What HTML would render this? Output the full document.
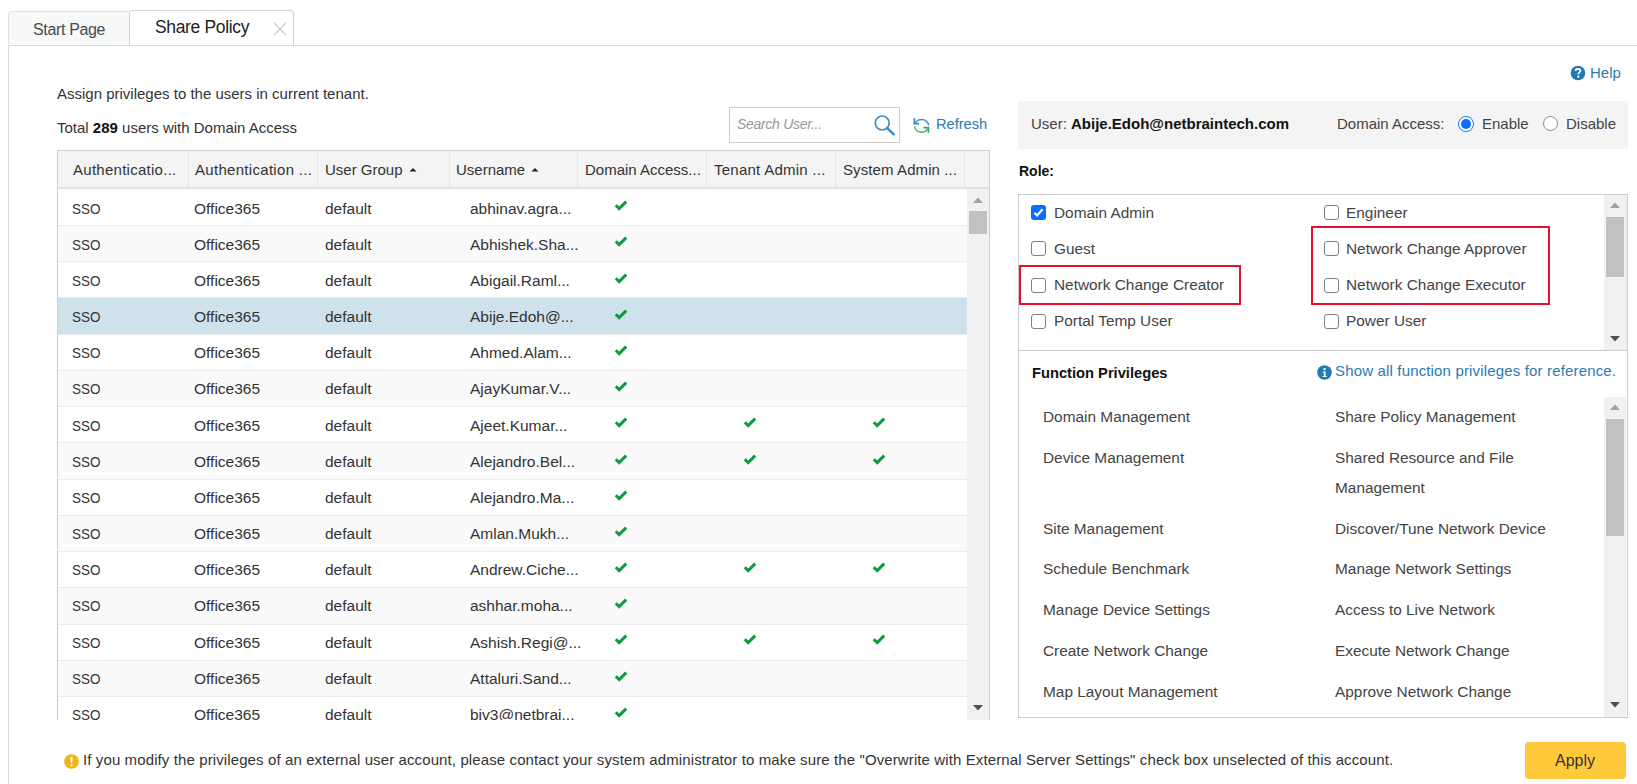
<!DOCTYPE html>
<html>
<head>
<meta charset="utf-8">
<style>
html,body{margin:0;padding:0;background:#fff;}
body{width:1637px;height:784px;position:relative;overflow:hidden;font-family:"Liberation Sans",sans-serif;color:#333;}
.a{position:absolute;}
.t{position:absolute;white-space:nowrap;font-size:15px;line-height:15px;}
.b{font-weight:bold;}
.tb{font-size:15.5px;}
.blue{color:#2a7bb3;}
</style>
</head>
<body>
<!-- tabs -->
<div class="a" style="left:8px;top:11px;width:121px;height:33px;background:#f7f9f9;border-top:1px solid #dfe2e4;border-left:1px solid #dfe2e4;border-top-left-radius:4px;box-sizing:border-box;"></div>
<div class="t" style="left:33px;top:22px;color:#4a4a4a;font-size:16px;line-height:16px;letter-spacing:-0.35px;">Start Page</div>
<div class="a" style="left:129px;top:10px;width:165px;height:36px;background:#fff;border:1px solid #cfd3d6;border-bottom:none;border-radius:4px 4px 0 0;box-sizing:border-box;"></div>
<div class="t" style="left:155px;top:19px;font-size:17.5px;line-height:17px;letter-spacing:-0.35px;color:#222;">Share Policy</div>
<svg class="a" style="left:273px;top:22px" width="14" height="14" viewBox="0 0 14 14"><path d="M1 1L13 13M13 1L1 13" stroke="#cccccc" stroke-width="1.3"/></svg>
<div class="a" style="left:8px;top:45px;width:1629px;height:1px;background:#d9d9d9;"></div>
<div class="a" style="left:8px;top:45px;width:1px;height:739px;background:#d9d9d9;"></div>

<!-- left header text -->
<div class="t" style="left:57px;top:86px;">Assign privileges to the users in current tenant.</div>
<div class="t" style="left:57px;top:120px;">Total <b style="color:#111">289</b> users with Domain Access</div>

<!-- table -->
<div class="a" style="left:57px;top:150px;width:933px;height:570px;border-left:1px solid #cfcfcf;border-right:1px solid #cfcfcf;border-top:1px solid #d0d0d0;box-sizing:border-box;background:#fff;"></div>
<div class="a" style="left:58px;top:151px;width:931px;height:36px;background:#f4f4f4;"></div>
<div class="a" style="left:58px;top:187px;width:931px;height:2px;background:#e2e2e2;"></div>
<div class="a" style="left:188px;top:151px;width:1px;height:36px;background:#e6e6e6;"></div>
<div class="a" style="left:317px;top:151px;width:1px;height:36px;background:#e6e6e6;"></div>
<div class="a" style="left:449px;top:151px;width:1px;height:36px;background:#e6e6e6;"></div>
<div class="a" style="left:577px;top:151px;width:1px;height:36px;background:#e6e6e6;"></div>
<div class="a" style="left:706px;top:151px;width:1px;height:36px;background:#e6e6e6;"></div>
<div class="a" style="left:835px;top:151px;width:1px;height:36px;background:#e6e6e6;"></div>
<div class="a" style="left:964px;top:151px;width:1px;height:36px;background:#e6e6e6;"></div>
<div class="t" style="left:73px;top:162px;letter-spacing:0.27px;">Authenticatio...</div>
<div class="t" style="left:195px;top:162px;letter-spacing:0.3px;">Authentication ...</div>
<div class="t" style="left:325px;top:162px;">User Group</div>
<svg class="a" style="left:409px;top:167px" width="8" height="5" viewBox="0 0 8 5"><path d="M0.5 4.5L4 1L7.5 4.5Z" fill="#222"/></svg>
<div class="t" style="left:456px;top:162px;">Username</div>
<svg class="a" style="left:531px;top:167px" width="8" height="5" viewBox="0 0 8 5"><path d="M0.5 4.5L4 1L7.5 4.5Z" fill="#222"/></svg>
<div class="t" style="left:585px;top:162px;">Domain Access...</div>
<div class="t" style="left:714px;top:162px;letter-spacing:0.25px;">Tenant Admin ...</div>
<div class="t" style="left:843px;top:162px;letter-spacing:0.1px;">System Admin ...</div>
<div class="a" style="left:0;top:0;width:1637px;height:720px;overflow:hidden;">
<div class="a" style="left:58px;top:189.77px;width:909px;height:36.23px;background:#fff;box-sizing:border-box;border-bottom:1px solid #ebebeb;"></div>
<div class="t tb" style="left:72px;top:201px;transform:scaleX(0.87);transform-origin:0 0;">SSO</div>
<div class="t tb" style="left:194px;top:201px;">Office365</div>
<div class="t tb" style="left:325px;top:201px;">default</div>
<div class="t tb" style="left:470px;top:201px;">abhinav.agra...</div>
<svg class="a" style="left:614px;top:200px" width="14" height="12" viewBox="0 0 14 12"><path d="M1.8 5.2L5.2 8.6L12.2 1.6" fill="none" stroke="#0d9b3e" stroke-width="3"/></svg>
<div class="a" style="left:58px;top:226.00px;width:909px;height:36.23px;background:#fafafa;box-sizing:border-box;border-bottom:1px solid #ebebeb;"></div>
<div class="t tb" style="left:72px;top:237px;transform:scaleX(0.87);transform-origin:0 0;">SSO</div>
<div class="t tb" style="left:194px;top:237px;">Office365</div>
<div class="t tb" style="left:325px;top:237px;">default</div>
<div class="t tb" style="left:470px;top:237px;">Abhishek.Sha...</div>
<svg class="a" style="left:614px;top:236px" width="14" height="12" viewBox="0 0 14 12"><path d="M1.8 5.2L5.2 8.6L12.2 1.6" fill="none" stroke="#0d9b3e" stroke-width="3"/></svg>
<div class="a" style="left:58px;top:262.23px;width:909px;height:36.23px;background:#fff;box-sizing:border-box;border-bottom:1px solid #ebebeb;"></div>
<div class="t tb" style="left:72px;top:273px;transform:scaleX(0.87);transform-origin:0 0;">SSO</div>
<div class="t tb" style="left:194px;top:273px;">Office365</div>
<div class="t tb" style="left:325px;top:273px;">default</div>
<div class="t tb" style="left:470px;top:273px;">Abigail.Raml...</div>
<svg class="a" style="left:614px;top:273px" width="14" height="12" viewBox="0 0 14 12"><path d="M1.8 5.2L5.2 8.6L12.2 1.6" fill="none" stroke="#0d9b3e" stroke-width="3"/></svg>
<div class="a" style="left:58px;top:298.46px;width:909px;height:36.23px;background:#cfe1ea;box-sizing:border-box;border-bottom:1px solid #ebebeb;"></div>
<div class="t tb" style="left:72px;top:309px;transform:scaleX(0.87);transform-origin:0 0;">SSO</div>
<div class="t tb" style="left:194px;top:309px;">Office365</div>
<div class="t tb" style="left:325px;top:309px;">default</div>
<div class="t tb" style="left:470px;top:309px;">Abije.Edoh@...</div>
<svg class="a" style="left:614px;top:309px" width="14" height="12" viewBox="0 0 14 12"><path d="M1.8 5.2L5.2 8.6L12.2 1.6" fill="none" stroke="#0d9b3e" stroke-width="3"/></svg>
<div class="a" style="left:58px;top:334.69px;width:909px;height:36.23px;background:#fff;box-sizing:border-box;border-bottom:1px solid #ebebeb;"></div>
<div class="t tb" style="left:72px;top:345px;transform:scaleX(0.87);transform-origin:0 0;">SSO</div>
<div class="t tb" style="left:194px;top:345px;">Office365</div>
<div class="t tb" style="left:325px;top:345px;">default</div>
<div class="t tb" style="left:470px;top:345px;">Ahmed.Alam...</div>
<svg class="a" style="left:614px;top:345px" width="14" height="12" viewBox="0 0 14 12"><path d="M1.8 5.2L5.2 8.6L12.2 1.6" fill="none" stroke="#0d9b3e" stroke-width="3"/></svg>
<div class="a" style="left:58px;top:370.92px;width:909px;height:36.23px;background:#fafafa;box-sizing:border-box;border-bottom:1px solid #ebebeb;"></div>
<div class="t tb" style="left:72px;top:381px;transform:scaleX(0.87);transform-origin:0 0;">SSO</div>
<div class="t tb" style="left:194px;top:381px;">Office365</div>
<div class="t tb" style="left:325px;top:381px;">default</div>
<div class="t tb" style="left:470px;top:381px;">AjayKumar.V...</div>
<svg class="a" style="left:614px;top:381px" width="14" height="12" viewBox="0 0 14 12"><path d="M1.8 5.2L5.2 8.6L12.2 1.6" fill="none" stroke="#0d9b3e" stroke-width="3"/></svg>
<div class="a" style="left:58px;top:407.15px;width:909px;height:36.23px;background:#fff;box-sizing:border-box;border-bottom:1px solid #ebebeb;"></div>
<div class="t tb" style="left:72px;top:418px;transform:scaleX(0.87);transform-origin:0 0;">SSO</div>
<div class="t tb" style="left:194px;top:418px;">Office365</div>
<div class="t tb" style="left:325px;top:418px;">default</div>
<div class="t tb" style="left:470px;top:418px;">Ajeet.Kumar...</div>
<svg class="a" style="left:614px;top:417px" width="14" height="12" viewBox="0 0 14 12"><path d="M1.8 5.2L5.2 8.6L12.2 1.6" fill="none" stroke="#0d9b3e" stroke-width="3"/></svg>
<svg class="a" style="left:743px;top:417px" width="14" height="12" viewBox="0 0 14 12"><path d="M1.8 5.2L5.2 8.6L12.2 1.6" fill="none" stroke="#0d9b3e" stroke-width="3"/></svg>
<svg class="a" style="left:872px;top:417px" width="14" height="12" viewBox="0 0 14 12"><path d="M1.8 5.2L5.2 8.6L12.2 1.6" fill="none" stroke="#0d9b3e" stroke-width="3"/></svg>
<div class="a" style="left:58px;top:443.38px;width:909px;height:36.23px;background:#fafafa;box-sizing:border-box;border-bottom:1px solid #ebebeb;"></div>
<div class="t tb" style="left:72px;top:454px;transform:scaleX(0.87);transform-origin:0 0;">SSO</div>
<div class="t tb" style="left:194px;top:454px;">Office365</div>
<div class="t tb" style="left:325px;top:454px;">default</div>
<div class="t tb" style="left:470px;top:454px;">Alejandro.Bel...</div>
<svg class="a" style="left:614px;top:454px" width="14" height="12" viewBox="0 0 14 12"><path d="M1.8 5.2L5.2 8.6L12.2 1.6" fill="none" stroke="#0d9b3e" stroke-width="3"/></svg>
<svg class="a" style="left:743px;top:454px" width="14" height="12" viewBox="0 0 14 12"><path d="M1.8 5.2L5.2 8.6L12.2 1.6" fill="none" stroke="#0d9b3e" stroke-width="3"/></svg>
<svg class="a" style="left:872px;top:454px" width="14" height="12" viewBox="0 0 14 12"><path d="M1.8 5.2L5.2 8.6L12.2 1.6" fill="none" stroke="#0d9b3e" stroke-width="3"/></svg>
<div class="a" style="left:58px;top:479.61px;width:909px;height:36.23px;background:#fff;box-sizing:border-box;border-bottom:1px solid #ebebeb;"></div>
<div class="t tb" style="left:72px;top:490px;transform:scaleX(0.87);transform-origin:0 0;">SSO</div>
<div class="t tb" style="left:194px;top:490px;">Office365</div>
<div class="t tb" style="left:325px;top:490px;">default</div>
<div class="t tb" style="left:470px;top:490px;">Alejandro.Ma...</div>
<svg class="a" style="left:614px;top:490px" width="14" height="12" viewBox="0 0 14 12"><path d="M1.8 5.2L5.2 8.6L12.2 1.6" fill="none" stroke="#0d9b3e" stroke-width="3"/></svg>
<div class="a" style="left:58px;top:515.84px;width:909px;height:36.23px;background:#fafafa;box-sizing:border-box;border-bottom:1px solid #ebebeb;"></div>
<div class="t tb" style="left:72px;top:526px;transform:scaleX(0.87);transform-origin:0 0;">SSO</div>
<div class="t tb" style="left:194px;top:526px;">Office365</div>
<div class="t tb" style="left:325px;top:526px;">default</div>
<div class="t tb" style="left:470px;top:526px;">Amlan.Mukh...</div>
<svg class="a" style="left:614px;top:526px" width="14" height="12" viewBox="0 0 14 12"><path d="M1.8 5.2L5.2 8.6L12.2 1.6" fill="none" stroke="#0d9b3e" stroke-width="3"/></svg>
<div class="a" style="left:58px;top:552.07px;width:909px;height:36.23px;background:#fff;box-sizing:border-box;border-bottom:1px solid #ebebeb;"></div>
<div class="t tb" style="left:72px;top:562px;transform:scaleX(0.87);transform-origin:0 0;">SSO</div>
<div class="t tb" style="left:194px;top:562px;">Office365</div>
<div class="t tb" style="left:325px;top:562px;">default</div>
<div class="t tb" style="left:470px;top:562px;">Andrew.Ciche...</div>
<svg class="a" style="left:614px;top:562px" width="14" height="12" viewBox="0 0 14 12"><path d="M1.8 5.2L5.2 8.6L12.2 1.6" fill="none" stroke="#0d9b3e" stroke-width="3"/></svg>
<svg class="a" style="left:743px;top:562px" width="14" height="12" viewBox="0 0 14 12"><path d="M1.8 5.2L5.2 8.6L12.2 1.6" fill="none" stroke="#0d9b3e" stroke-width="3"/></svg>
<svg class="a" style="left:872px;top:562px" width="14" height="12" viewBox="0 0 14 12"><path d="M1.8 5.2L5.2 8.6L12.2 1.6" fill="none" stroke="#0d9b3e" stroke-width="3"/></svg>
<div class="a" style="left:58px;top:588.30px;width:909px;height:36.23px;background:#fafafa;box-sizing:border-box;border-bottom:1px solid #ebebeb;"></div>
<div class="t tb" style="left:72px;top:598px;transform:scaleX(0.87);transform-origin:0 0;">SSO</div>
<div class="t tb" style="left:194px;top:598px;">Office365</div>
<div class="t tb" style="left:325px;top:598px;">default</div>
<div class="t tb" style="left:470px;top:598px;">ashhar.moha...</div>
<svg class="a" style="left:614px;top:598px" width="14" height="12" viewBox="0 0 14 12"><path d="M1.8 5.2L5.2 8.6L12.2 1.6" fill="none" stroke="#0d9b3e" stroke-width="3"/></svg>
<div class="a" style="left:58px;top:624.53px;width:909px;height:36.23px;background:#fff;box-sizing:border-box;border-bottom:1px solid #ebebeb;"></div>
<div class="t tb" style="left:72px;top:635px;transform:scaleX(0.87);transform-origin:0 0;">SSO</div>
<div class="t tb" style="left:194px;top:635px;">Office365</div>
<div class="t tb" style="left:325px;top:635px;">default</div>
<div class="t tb" style="left:470px;top:635px;">Ashish.Regi@...</div>
<svg class="a" style="left:614px;top:634px" width="14" height="12" viewBox="0 0 14 12"><path d="M1.8 5.2L5.2 8.6L12.2 1.6" fill="none" stroke="#0d9b3e" stroke-width="3"/></svg>
<svg class="a" style="left:743px;top:634px" width="14" height="12" viewBox="0 0 14 12"><path d="M1.8 5.2L5.2 8.6L12.2 1.6" fill="none" stroke="#0d9b3e" stroke-width="3"/></svg>
<svg class="a" style="left:872px;top:634px" width="14" height="12" viewBox="0 0 14 12"><path d="M1.8 5.2L5.2 8.6L12.2 1.6" fill="none" stroke="#0d9b3e" stroke-width="3"/></svg>
<div class="a" style="left:58px;top:660.76px;width:909px;height:36.23px;background:#fafafa;box-sizing:border-box;border-bottom:1px solid #ebebeb;"></div>
<div class="t tb" style="left:72px;top:671px;transform:scaleX(0.87);transform-origin:0 0;">SSO</div>
<div class="t tb" style="left:194px;top:671px;">Office365</div>
<div class="t tb" style="left:325px;top:671px;">default</div>
<div class="t tb" style="left:470px;top:671px;">Attaluri.Sand...</div>
<svg class="a" style="left:614px;top:671px" width="14" height="12" viewBox="0 0 14 12"><path d="M1.8 5.2L5.2 8.6L12.2 1.6" fill="none" stroke="#0d9b3e" stroke-width="3"/></svg>
<div class="a" style="left:58px;top:696.99px;width:909px;height:36.23px;background:#fff;box-sizing:border-box;border-bottom:1px solid #ebebeb;"></div>
<div class="t tb" style="left:72px;top:707px;transform:scaleX(0.87);transform-origin:0 0;">SSO</div>
<div class="t tb" style="left:194px;top:707px;">Office365</div>
<div class="t tb" style="left:325px;top:707px;">default</div>
<div class="t tb" style="left:470px;top:707px;">biv3@netbrai...</div>
<svg class="a" style="left:614px;top:707px" width="14" height="12" viewBox="0 0 14 12"><path d="M1.8 5.2L5.2 8.6L12.2 1.6" fill="none" stroke="#0d9b3e" stroke-width="3"/></svg>
</div>
<!-- table scrollbar -->
<div class="a" style="left:967px;top:189px;width:22px;height:531px;background:#f1f1f1;"></div>
<svg class="a" style="left:972px;top:196px" width="12" height="8" viewBox="0 0 12 8"><path d="M1 7L6 1.5L11 7Z" fill="#a3a3a3"/></svg>
<div class="a" style="left:969px;top:211px;width:18px;height:23px;background:#c1c1c1;"></div>
<svg class="a" style="left:972px;top:704px" width="12" height="8" viewBox="0 0 12 8"><path d="M1 1L6 6.5L11 1Z" fill="#505050"/></svg>

<!-- search & refresh -->
<div class="a" style="left:729px;top:107px;width:171px;height:36px;border:1px solid #cccccc;box-sizing:border-box;background:#fff;"></div>
<div class="t" style="left:737px;top:117px;font-style:italic;color:#999;font-size:14px;letter-spacing:-0.3px;">Search User...</div>
<svg class="a" style="left:873px;top:114px" width="23" height="22" viewBox="0 0 23 22"><circle cx="9.2" cy="9" r="7" fill="none" stroke="#4590c9" stroke-width="1.7"/><path d="M14.2 14.2L20.8 20.3" stroke="#3d8cc6" stroke-width="2.5" stroke-linecap="round"/></svg>
<svg class="a" style="left:912px;top:117px" width="19" height="17" viewBox="0 0 19 17"><path d="M2.3 1.3V6.6H7" fill="none" stroke="#3583c4" stroke-width="1.6"/><path d="M3 6C4.6 3.6 6.8 2.5 9.6 2.5C13.2 2.5 16.2 5 16.6 8.3" fill="none" stroke="#4a93cc" stroke-width="1.5"/><path d="M2.6 9.5C3 12.8 5.8 15.2 9.5 15.2C12 15.2 14.3 14 15.8 11.8" fill="none" stroke="#45b072" stroke-width="1.5"/><path d="M11.5 10.6H16.4V15.8" fill="none" stroke="#2fa463" stroke-width="1.6"/></svg>
<div class="t blue" style="left:936px;top:117px;font-size:14.6px;line-height:15px;">Refresh</div>

<!-- help -->
<svg class="a" style="left:1570px;top:65px" width="16" height="16" viewBox="0 0 16 16"><circle cx="8" cy="8" r="7.3" fill="#1f7bb9"/><path d="M5.6 6.1C5.6 4.6 6.6 3.9 8 3.9C9.4 3.9 10.4 4.7 10.4 5.9C10.4 7.4 8.4 7.5 8.4 9.2" fill="none" stroke="#fff" stroke-width="1.7"/><circle cx="8.3" cy="11.7" r="1.1" fill="#fff"/></svg>
<div class="t blue" style="left:1590px;top:65px;">Help</div>

<!-- user bar -->
<div class="a" style="left:1018px;top:101px;width:610px;height:48px;background:#f4f4f4;"></div>
<div class="t" style="left:1031px;top:116px;color:#444;">User: <b style="color:#111">Abije.Edoh@netbraintech.com</b></div>
<div class="t" style="left:1337px;top:116px;color:#444;">Domain Access:</div>
<div class="a" style="left:1458px;top:116px;width:16px;height:16px;border-radius:50%;border:1.6px solid #1a75ff;box-sizing:border-box;background:#fff;"></div>
<div class="a" style="left:1461px;top:119px;width:10px;height:10px;border-radius:50%;background:#0b70ff;"></div>
<div class="t" style="left:1482px;top:116px;color:#444;">Enable</div>
<div class="a" style="left:1543px;top:116px;width:15px;height:15px;border-radius:50%;border:1.5px solid #8a8a8a;box-sizing:border-box;background:#fff;"></div>
<div class="t" style="left:1566px;top:116px;color:#444;">Disable</div>

<div class="t b" style="left:1019px;top:164px;color:#111;font-size:14px;">Role:</div>

<!-- outer box -->
<div class="a" style="left:1018px;top:194px;width:610px;height:524px;border:1px solid #cccccc;box-sizing:border-box;background:#fff;"></div>
<!-- roles scrollbar -->
<div class="a" style="left:1604px;top:195px;width:23px;height:155px;background:#f1f1f1;"></div>
<svg class="a" style="left:1609px;top:201px" width="12" height="8" viewBox="0 0 12 8"><path d="M1 7L6 1.5L11 7Z" fill="#a3a3a3"/></svg>
<div class="a" style="left:1606px;top:217px;width:18px;height:60px;background:#c1c1c1;"></div>
<svg class="a" style="left:1609px;top:335px" width="12" height="8" viewBox="0 0 12 8"><path d="M1 1L6 6.5L11 1Z" fill="#505050"/></svg>
<div class="a" style="left:1019px;top:350px;width:608px;height:1px;background:#cccccc;"></div>

<div class="a" style="left:1031px;top:205px;width:15px;height:15px;border-radius:3px;background:#0b6ffd;"></div>
<svg class="a" style="left:1031px;top:205px" width="15" height="15" viewBox="0 0 15 15"><path d="M3.4 7.7L6.1 10.4L11.6 4.3" fill="none" stroke="#fff" stroke-width="2.1"/></svg>
<div class="t" style="left:1054px;top:205px;color:#444;font-size:15.4px;">Domain Admin</div>
<div class="a" style="left:1324px;top:205px;width:15px;height:15px;border-radius:3px;border:1.3px solid #808080;box-sizing:border-box;background:#fff;"></div>
<div class="t" style="left:1346px;top:205px;color:#444;font-size:15.4px;">Engineer</div>
<div class="a" style="left:1031px;top:241px;width:15px;height:15px;border-radius:3px;border:1.3px solid #808080;box-sizing:border-box;background:#fff;"></div>
<div class="t" style="left:1054px;top:241px;color:#444;font-size:15.4px;">Guest</div>
<div class="a" style="left:1324px;top:241px;width:15px;height:15px;border-radius:3px;border:1.3px solid #808080;box-sizing:border-box;background:#fff;"></div>
<div class="t" style="left:1346px;top:241px;color:#444;font-size:15.4px;">Network Change Approver</div>
<div class="a" style="left:1031px;top:278px;width:15px;height:15px;border-radius:3px;border:1.3px solid #808080;box-sizing:border-box;background:#fff;"></div>
<div class="t" style="left:1054px;top:277px;color:#444;font-size:15.4px;">Network Change Creator</div>
<div class="a" style="left:1324px;top:278px;width:15px;height:15px;border-radius:3px;border:1.3px solid #808080;box-sizing:border-box;background:#fff;"></div>
<div class="t" style="left:1346px;top:277px;color:#444;font-size:15.4px;">Network Change Executor</div>
<div class="a" style="left:1031px;top:314px;width:15px;height:15px;border-radius:3px;border:1.3px solid #808080;box-sizing:border-box;background:#fff;"></div>
<div class="t" style="left:1054px;top:313px;color:#444;font-size:15.4px;">Portal Temp User</div>
<div class="a" style="left:1324px;top:314px;width:15px;height:15px;border-radius:3px;border:1.3px solid #808080;box-sizing:border-box;background:#fff;"></div>
<div class="t" style="left:1346px;top:313px;color:#444;font-size:15.4px;">Power User</div>
<div class="a" style="left:1019px;top:265px;width:222px;height:40px;border:2px solid #e8112d;box-sizing:border-box;"></div>
<div class="a" style="left:1311px;top:226px;width:239px;height:79px;border:2px solid #e8112d;box-sizing:border-box;"></div>
<div class="t b" style="left:1032px;top:366px;color:#111;font-size:14.7px;">Function Privileges</div>
<svg class="a" style="left:1317px;top:365px" width="15" height="15" viewBox="0 0 15 15"><circle cx="7.5" cy="7.5" r="7.3" fill="#1f7bb9"/><circle cx="7.6" cy="4.1" r="1.2" fill="#fff"/><path d="M5.6 6.5H8.6V10.9H9.8V12H5.6V10.9H6.8V7.6H5.6Z" fill="#fff"/></svg>
<div class="t blue" style="left:1335px;top:363px;letter-spacing:0.16px;">Show all function privileges for reference.</div>
<div class="a" style="left:1604px;top:397px;width:22px;height:320px;background:#f1f1f1;"></div>
<svg class="a" style="left:1609px;top:403px" width="12" height="8" viewBox="0 0 12 8"><path d="M1 7L6 1.5L11 7Z" fill="#a3a3a3"/></svg>
<div class="a" style="left:1606px;top:419px;width:18px;height:117px;background:#c1c1c1;"></div>
<svg class="a" style="left:1609px;top:701px" width="12" height="8" viewBox="0 0 12 8"><path d="M1 1L6 6.5L11 1Z" fill="#505050"/></svg>
<div class="t" style="left:1043px;top:409px;color:#444;font-size:15.4px;">Domain Management</div>
<div class="t" style="left:1335px;top:409px;color:#444;font-size:15.4px;">Share Policy Management</div>
<div class="t" style="left:1043px;top:450px;color:#444;font-size:15.4px;">Device Management</div>
<div class="t" style="left:1335px;top:450px;color:#444;font-size:15.4px;">Shared Resource and File</div>
<div class="t" style="left:1335px;top:480px;color:#444;font-size:15.4px;">Management</div>
<div class="t" style="left:1043px;top:521px;color:#444;font-size:15.4px;">Site Management</div>
<div class="t" style="left:1335px;top:521px;color:#444;font-size:15.4px;">Discover/Tune Network Device</div>
<div class="t" style="left:1043px;top:561px;color:#444;font-size:15.4px;">Schedule Benchmark</div>
<div class="t" style="left:1335px;top:561px;color:#444;font-size:15.4px;">Manage Network Settings</div>
<div class="t" style="left:1043px;top:602px;color:#444;font-size:15.4px;">Manage Device Settings</div>
<div class="t" style="left:1335px;top:602px;color:#444;font-size:15.4px;">Access to Live Network</div>
<div class="t" style="left:1043px;top:643px;color:#444;font-size:15.4px;">Create Network Change</div>
<div class="t" style="left:1335px;top:643px;color:#444;font-size:15.4px;">Execute Network Change</div>
<div class="t" style="left:1043px;top:684px;color:#444;font-size:15.4px;">Map Layout Management</div>
<div class="t" style="left:1335px;top:684px;color:#444;font-size:15.4px;">Approve Network Change</div>
<svg class="a" style="left:64px;top:754px" width="15" height="15" viewBox="0 0 15 15"><circle cx="7.5" cy="7.5" r="7.3" fill="#f0b41c"/><path d="M6.4 3H8.6L8.2 9H6.8Z" fill="#fff"/><circle cx="7.5" cy="11.3" r="1.1" fill="#fff"/></svg>
<div class="t" style="left:83px;top:752px;letter-spacing:0.11px;">If you modify the privileges of an external user account, please contact your system administrator to make sure the "Overwrite with External Server Settings" check box unselected of this account.</div>
<div class="a" style="left:1525px;top:742px;width:101px;height:36.5px;border-radius:4px;background:#ffc93c;"></div>
<div class="t" style="left:1555px;top:753px;font-size:16px;line-height:16px;color:#333;">Apply</div>

</body>
</html>
